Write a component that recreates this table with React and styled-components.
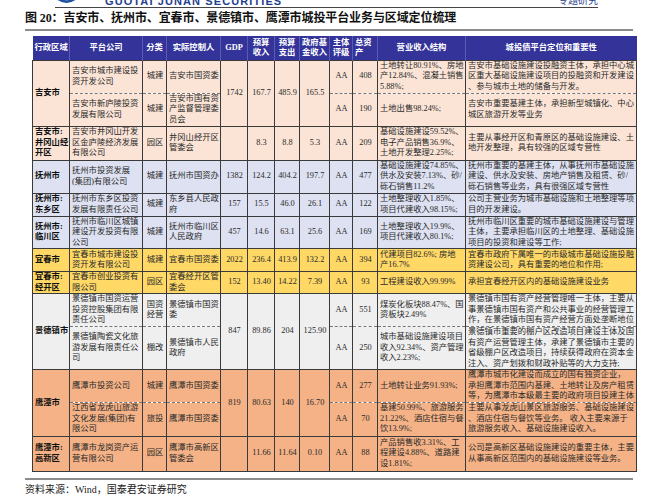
import React from 'react'
import styled, { createGlobalStyle } from 'styled-components'

const GlobalStyle = createGlobalStyle`
  body {
    margin: 0;
    background: #fff;
    font-family: "Liberation Serif", "Noto Sans CJK SC", serif;
    color: #262626;
  }
`

const Page = styled.div`
  width: 653px;
  padding: 0 20px 0 25px;
  box-sizing: border-box;
`

const TopBar = styled.div`
  display: flex;
  align-items: flex-end;
  gap: 27px;
  height: 7px;
  width: 543px;
  margin-left: 30px;
  border-bottom: 1px solid #444;
  overflow: hidden;
`

const Brand = styled.div`
  font-family: "Liberation Sans", Arial, sans-serif;
  font-weight: bold;
  font-size: 11px;
  line-height: 8px;
  letter-spacing: 1.1px;
  color: #1f3f8f;
  margin-bottom: 2px;
`

const Tag = styled.div`
  margin-left: auto;
  font-size: 10px;
  line-height: 8px;
  color: #1f3f8f;
  margin-bottom: 2px;
`

const Title = styled.h1`
  margin: 3px 0 0;
  font-size: 12px;
  line-height: 14px;
  font-weight: bold;
  letter-spacing: -0.1px;
  color: #111;
`

const Rule = styled.div`
  width: 608px;
  border-top: 2px solid #8c8c8c;
  margin-top: ${p => p.$gap}px;
`

const Table = styled.table`
  margin: 5px 0 0 7px;
  width: 604px;
  border-collapse: collapse;
  table-layout: fixed;
  font-size: 8.3px;
  line-height: 10.5px;
`

const HeadRow = styled.tr`
  height: 24px;
  background: #333399;
`

const Th = styled.th`
  color: #fff;
  font-weight: bold;
  font-size: 8.3px;
  line-height: 10px;
  padding: 0 2px;
  text-align: ${p => p.$align || 'center'};
  white-space: pre;
  border-left: 1px solid #5b5bb3;
  &:first-child { border-left: none; }
`

const Row = styled.tr`
  background: ${p => p.$bg};
`

const Td = styled.td`
  padding: 0 1px 0 2px;
  vertical-align: middle;
  white-space: pre;
  overflow: hidden;
  text-align: ${p => p.$align || 'left'};
  font-weight: ${p => (p.$bold ? 'bold' : 'normal')};
  color: ${p => (p.$bold ? '#111' : '#2a2a2a')};
  border: 1px solid #3a3a3a;
  border-top-style: ${p => (p.$dashT ? 'dashed' : 'solid')};
  border-bottom-style: ${p => (p.$dashB ? 'dashed' : 'solid')};
  ${p => (p.$dashT ? 'border-top-color: #777;' : '')}
  ${p => (p.$dashB ? 'border-bottom-color: #777;' : '')}
`

const Source = styled.div`
  margin-top: 3px;
  font-size: 10px;
  line-height: 13px;
  color: #222;
`

const Logo = () => (
  <svg width="23" height="10" viewBox="0 0 23 10" style={{ marginBottom: 1, flexShrink: 0 }}>
    <path d="M0 2 Q11.5 12 23 2 L23 0 L0 0 Z" fill="#1f4f9f" />
    <path d="M4 1 Q11.5 7 19 1" stroke="#8fb3e0" strokeWidth="1" fill="none" />
  </svg>
)

const widths = [37, 73, 24, 54, 27, 27, 25, 30, 23, 25, 88, 171]

const heads = [
  ['行政区域', 'left'],
  ['平台公司'],
  ['分类'],
  ['实际控制人'],
  ['GDP'],
  ['预算\n收入'],
  ['预算\n支出'],
  ['政府基\n金收入'],
  ['主体\n评级'],
  ['总资\n产', 'left'],
  ['营业收入结构'],
  ['城投债平台定位和重要性'],
]

const colors = {
  jian: '#fbe4d6',
  fuzhou: '#dde1f1',
  yichun: '#ffd866',
  jdz: '#efefef',
  yingtan: '#f4b286',
}

const rows = [
  {
    bg: colors.jian, h: 33, span: 2, region: '吉安市',
    company: '吉安市城市建设投\n资开发公司', type: '城建', ctrl: '吉安市国资委',
    fiscal: ['1742', '167.7', '485.9', '165.5'], rating: 'AA', assets: '408',
    income: '土地转让80.91%、房地\n产12.84%、混凝土销售\n5.88%;',
    position: '吉安市基础设施建设投融资主体，承担中心城\n区重大基础设施建设项目的投融资和开发建设\n、参与城市土地的储备与开发。',
  },
  {
    bg: colors.jian, h: 33, cont: true,
    company: '吉安市新庐陵投资\n发展有限公司', type: '城建', ctrl: '吉安市国有资\n产监督管理委\n员会',
    rating: 'AA', assets: '190', income: '土地出售98.24%;',
    position: '吉安市重要基建主体，承担新型城镇化、中心\n城区旅游开发等业务',
  },
  {
    bg: colors.jian, h: 34, region: '吉安市:\n井冈山经\n开区',
    company: '吉安市井冈山开发\n区金庐陵经济发展\n有限公司', type: '园区', ctrl: '井冈山经开区\n管委会',
    fiscal: ['', '8.3', '8.8', '5.3'], rating: 'AA', assets: '209',
    income: '基础设施建设59.52%、\n电子产品销售36.9%、\n土地开发整理2.25%;',
    position: '主要从事经开区和青原区的基础设施建设、土\n地开发整理，具有较强的区域专营性',
  },
  {
    bg: colors.fuzhou, h: 33, region: '抚州市',
    company: '抚州市投资发展\n(集团)有限公司', type: '城建', ctrl: '抚州市国资办',
    fiscal: ['1382', '124.2', '404.2', '197.7'], rating: 'AA', assets: '477',
    income: '基础设施建设74.85%、\n供水及安装7.13%、砂/\n砾石销售11.2%',
    position: '抚州市重要的基建主体，从事抚州市基础设施\n建设、供水及安装、房地产销售及租赁、砂/\n砾石销售等业务，具有很强区域专营性',
  },
  {
    bg: colors.fuzhou, h: 23, region: '抚州市:\n东乡区',
    company: '抚州市东乡区投资\n发展有限责任公司', type: '城建', ctrl: '东乡县人民政\n府',
    fiscal: ['157', '15.5', '46.0', '26.1'], rating: 'AA', assets: '122',
    income: '土地整理收入1.85%、\n项目代建收入98.15%;',
    position: '公司主营业务为城市基础设施和土地整理等项\n目的开发建设。',
  },
  {
    bg: colors.fuzhou, h: 32, region: '抚州市:\n临川区',
    company: '抚州市临川区城镇\n建设开发投资有限\n公司', type: '城建', ctrl: '抚州市临川区\n人民政府',
    fiscal: ['457', '14.6', '63.1', '25.6'], rating: 'AA', assets: '169',
    income: '土地整理收入19.9%、\n项目代建收入80.1%;',
    position: '抚州市临川区重要的城市基础设施建设与管理\n主体，主要承担临川区的土地整理、基础设施\n项目的投资和建设等工作;',
  },
  {
    bg: colors.yichun, h: 23, region: '宜春市',
    company: '宜春市城市建设投\n资开发有限公司', type: '城建', ctrl: '宜春市国资委',
    fiscal: ['2022', '236.4', '413.9', '132.2'], rating: 'AA', assets: '394',
    income: '代建项目82.6%; 房地\n产16.7%',
    position: '宜春市政府下属唯一的市级城市基础设施投融\n资建设公司，具有重要的地位和作用;',
  },
  {
    bg: colors.yichun, h: 21, region: '宜春市:\n经开区',
    company: '宜春市创业投资有\n限公司', type: '园区', ctrl: '宜春经开区管\n委会',
    fiscal: ['152', '13.40', '14.22', '7.39'], rating: 'AA', assets: '93',
    income: '工程建设收入99.99%',
    position: '承担宜春经开区内的基础设施建设业务',
  },
  {
    bg: colors.jdz, h: 33, span: 2, region: '景德镇市',
    company: '景德镇市国资运营\n投资控股集团有限\n责任公司', type: '国资\n经营', ctrl: '景德镇市国资\n委',
    fiscal: ['847', '89.86', '204', '125.90'], rating: 'AA', assets: '551',
    income: '煤炭化板块88.47%、国\n资板块2.49%',
    position: '景德镇市国有资产经营管理唯一主体，主要从\n事景德镇市国有资产和公共事业的经营管理工\n作，在景德镇市国有资产经营方面处垄断地位',
  },
  {
    bg: colors.jdz, h: 43, cont: true,
    company: '景德镇陶瓷文化旅\n游发展有限责任公\n司', type: '棚改', ctrl: '景德镇市人民\n政府',
    rating: 'AA', assets: '250',
    income: '城市基础设施建设项目\n收入92.34%、资产管理\n收入2.23%;',
    position: '景德镇市重要的棚户区改造项目建设主体及国\n有资产运营管理主体，承建了景德镇市主要的\n省级棚户区改造项目，持续获得政府在资本金\n注入、资产划拨和财政补贴等的大力支持;',
  },
  {
    bg: colors.yingtan, h: 32, span: 2, region: '鹰潭市',
    company: '鹰潭市投资公司', type: '城建', ctrl: '鹰潭市国资委',
    fiscal: ['819', '80.63', '140', '16.70'], rating: 'AA', assets: '277',
    income: '土地转让业务91.93%;',
    position: '鹰潭市城市化建设而成立的国有独资企业，\n承担鹰潭市范围内基建、土地转让及房产租赁\n等，为鹰潭市本级最主要的政府项目投建主体',
  },
  {
    bg: colors.yingtan, h: 34, cont: true,
    company: '江西省龙虎山旅游\n文化发展(集团)有\n限公司', type: '旅投', ctrl: '鹰潭市国资委',
    rating: 'AA', assets: '70',
    income: '基建50.99%、旅游服务\n21.22%、酒店住宿与餐\n饮13.9%;',
    position: '主要从事龙虎山景区旅游服务、基础设施建设\n、酒店住宿与餐饮等业务。 收入主要来源于\n旅游服务收入、基础设施建设收入。',
  },
  {
    bg: colors.yingtan, h: 35, region: '鹰潭市:\n高新区',
    company: '鹰潭市龙岗资产运\n营有限公司', type: '园区', ctrl: '鹰潭市高新区\n管委会',
    fiscal: ['', '11.66', '11.64', '0.10'], rating: 'AA', assets: '88',
    income: '产品销售收3.31%、工\n程建设4.88%、道路建\n设1.81%;',
    position: '公司是高新区基础设施建设的重要主体，主要\n从事高新区范围内的基础设施建设等业务。',
  },
]

export default function App() {
  return (
    <Page>
      <GlobalStyle />
      <TopBar>
        <Logo />
        <Brand>GUOTAI JUNAN SECURITIES</Brand>
        <Tag>专题研究</Tag>
      </TopBar>
      <Title>图 20：吉安市、抚州市、宜春市、景德镇市、鹰潭市城投平台业务与区域定位梳理</Title>
      <Rule $gap={4} />

      <Table>
        <colgroup>
          {widths.map((w, i) => <col key={i} style={{ width: w }} />)}
        </colgroup>
        <thead>
          <HeadRow>
            {heads.map(([label, align]) => (
              <Th key={label} $align={align}>{label}</Th>
            ))}
          </HeadRow>
        </thead>
        <tbody>
          {rows.map((r, i) => {
            const dashB = !!r.span
            const dashT = !!r.cont
            return (
              <Row key={i} $bg={r.bg} style={{ height: r.h }}>
                {!r.cont && <Td rowSpan={r.span || 1} $bold>{r.region}</Td>}
                <Td $dashB={dashB} $dashT={dashT}>{r.company}</Td>
                <Td $dashB={dashB} $dashT={dashT} $align="center">{r.type}</Td>
                <Td $dashB={dashB} $dashT={dashT}>{r.ctrl}</Td>
                {!r.cont && r.fiscal.map((v, j) => (
                  <Td key={j} rowSpan={r.span || 1} $align="center">{v}</Td>
                ))}
                <Td $dashB={dashB} $dashT={dashT} $align="center">{r.rating}</Td>
                <Td $dashB={dashB} $dashT={dashT} $align="center">{r.assets}</Td>
                <Td $dashB={dashB} $dashT={dashT}>{r.income}</Td>
                <Td $dashB={dashB} $dashT={dashT}>{r.position}</Td>
              </Row>
            )
          })}
        </tbody>
      </Table>

      <Rule $gap={6} />
      <Source>资料来源：Wind，国泰君安证券研究</Source>
    </Page>
  )
}
